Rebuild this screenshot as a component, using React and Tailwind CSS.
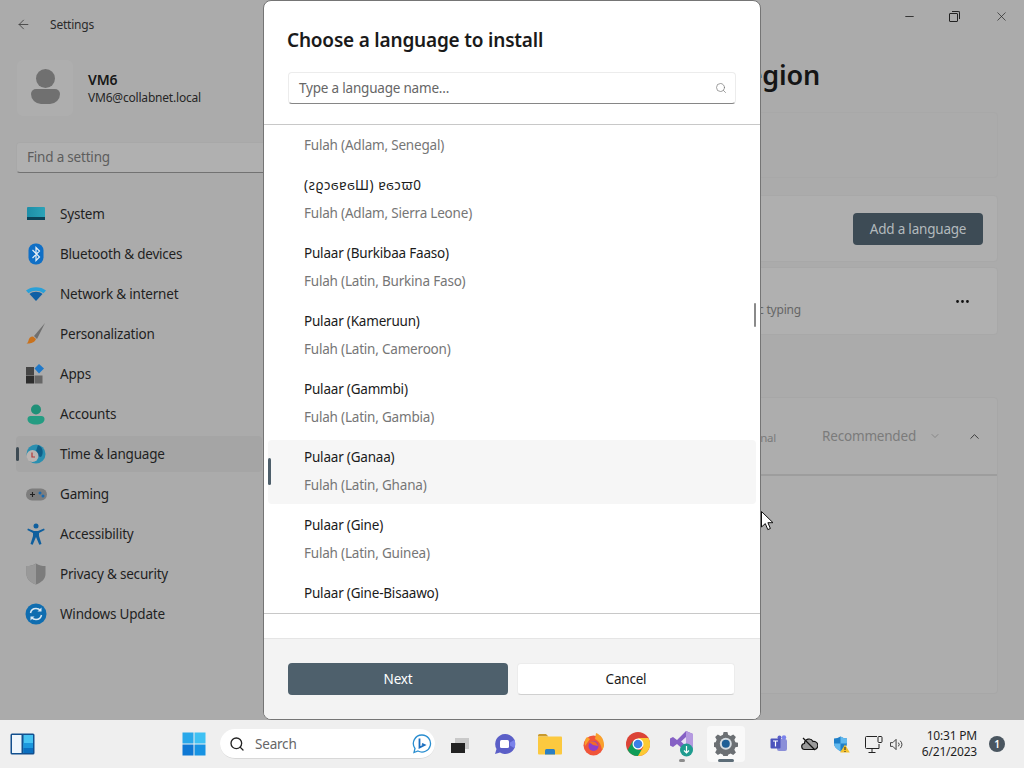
import React from "react";
import { ArrowLeft, ChevronDown, ChevronUp, Ellipsis, Minus, Search, X } from "lucide-react";

const SystemIcon = () => (
  <svg width="20" height="16" viewBox="0 0 20 16">
    <defs>
      <linearGradient id="sysScreen" x1="0" y1="0" x2="1" y2="0">
        <stop offset="0" stopColor="#1d8ea8" />
        <stop offset="1" stopColor="#2ba3b8" />
      </linearGradient>
    </defs>
    <rect x="1" y="1" width="18" height="13" rx="1" fill="url(#sysScreen)" />
    <rect x="1" y="11" width="18" height="3" fill="#0b4258" />
  </svg>
);

const BluetoothIcon = () => (
  <svg width="18" height="22" viewBox="0 0 18 22">
    <rect x="1.500" y="0.500" width="15" height="21" rx="7" fill="#0f6fc6" />
    <path d="M5.500 7l7 7-3.500 3.500v-13L12.500 8l-7 7" fill="none" stroke="#e6eef5" strokeWidth="1.200" />
  </svg>
);

const NetworkIcon = () => (
  <svg width="20" height="16" viewBox="0 0 20 16">
    <path d="M0 4.500C5 0 15 0 20 4.500l-2.500 2.800C13 4 7 4 2.500 7.300z" fill="#29a0d8" />
    <path d="M3.500 8C7 5 13 5 16.500 8L10 15z" fill="#0e5fa5" />
  </svg>
);

const BrushIcon = () => (
  <svg width="20" height="22" viewBox="0 0 20 22">
    <path d="M19 0L8 13l3 3z" fill="#6f6f6f" />
    <path d="M7 13.500c-3 0-4 2-4.500 4-.3 1.500-1 2.500-2 3 3 .5 8-.5 9.500-4.500z" fill="#c9721d" />
  </svg>
);

const AppsIcon = () => (
  <svg width="20" height="20" viewBox="0 0 20 20">
    <rect x="0" y="3" width="8" height="8" fill="#454545" />
    <rect x="0" y="11.500" width="8" height="8" fill="#2d2d2d" />
    <rect x="8.500" y="11.500" width="8" height="8" fill="#666" />
    <path d="M13 0l5 4.500-5 5-4.500-5z" fill="#1f78c8" />
  </svg>
);

const AccountsIcon = () => (
  <svg width="18" height="21" viewBox="0 0 18 21">
    <circle cx="9" cy="5.500" r="5" fill="#1f9078" />
    <path d="M0.500 15c0-2 1.500-3 3-3h11c1.500 0 3 1 3 3 0 4-4 5.500-8.500 5.500S.5 19 .5 15z" fill="#249c82" />
  </svg>
);

const TimeIcon = () => (
  <svg width="20" height="20" viewBox="0 0 20 20">
    <circle cx="10" cy="10" r="9.500" fill="#2a8fb0" />
    <path d="M12 1c5 2 6 8 3 12l-4-1-1-5z" fill="#0f5f88" />
    <circle cx="6.500" cy="12" r="6" fill="#b9b4b2" />
    <path d="M6 8.500V13h3" stroke="#b23a3a" strokeWidth="1.200" fill="none" />
  </svg>
);

const GamingIcon = () => (
  <svg width="21" height="13" viewBox="0 0 21 13">
    <rect x="0" y="0.500" width="21" height="12" rx="6" fill="#7d7d7d" />
    <path d="M4 6.500h5M6.500 4v5" stroke="#222" strokeWidth="1.100" />
    <circle cx="14" cy="5" r="1.500" fill="#1b6ab0" />
    <circle cx="17" cy="8" r="1.500" fill="#1b6ab0" />
  </svg>
);

const AccessIcon = () => (
  <svg width="18" height="22" viewBox="0 0 18 22">
    <circle cx="9" cy="3" r="2.500" fill="#0f5f9e" />
    <path d="M1 5.500l6 2.500h4l6-2.500.7 1.600L12 10v3l2.500 8-2.200.7L9 14l-3.300 7.700-2.200-.7L6 13v-3L.300 7.100z" fill="#0f5f9e" />
  </svg>
);

const ShieldIcon = () => (
  <svg width="20" height="22" viewBox="0 0 20 22">
    <path d="M10 0.500c3 2 6 2.500 9.500 2.500v8c0 5-4 8.500-9.500 10.500C4.500 19.500.5 16 .5 11V3C4 3 7 2.500 10 .5z" fill="#7c7c7c" />
    <path d="M10 0.500v21C4.500 19.500.5 16 .5 11V3C4 3 7 2.500 10 .5z" fill="#999" />
  </svg>
);

const UpdateIcon = () => (
  <svg width="22" height="22" viewBox="0 0 22 22">
    <circle cx="11" cy="11" r="10.500" fill="#0f6db0" />
    <path d="M5.500 10c.6-3 3-4.500 5.500-4.500 2 0 3.500.8 4.500 2M16.500 12c-.6 3-3 4.500-5.500 4.500-2 0-3.500-.8-4.500-2" fill="none" stroke="#dbe9f3" strokeWidth="1.500" />
    <path d="M16.500 4.500v4h-4zM5.500 17.500v-4h4z" fill="#dbe9f3" />
  </svg>
);

const navItems = [
  { label: "System", icon: <SystemIcon /> },
  { label: "Bluetooth & devices", icon: <BluetoothIcon /> },
  { label: "Network & internet", icon: <NetworkIcon /> },
  { label: "Personalization", icon: <BrushIcon /> },
  { label: "Apps", icon: <AppsIcon /> },
  { label: "Accounts", icon: <AccountsIcon /> },
  { label: "Time & language", icon: <TimeIcon />, active: true },
  { label: "Gaming", icon: <GamingIcon /> },
  { label: "Accessibility", icon: <AccessIcon /> },
  { label: "Privacy & security", icon: <ShieldIcon /> },
  { label: "Windows Update", icon: <UpdateIcon /> },
];

const languages = [
  { name: "", sub: "Fulah (Adlam, Senegal)" },
  { name: "(ƨϱɔϭɐϭШ) ɐϭɔϖ0", sub: "Fulah (Adlam, Sierra Leone)", nameClass: "tracking-[0.5px]" },
  { name: "Pulaar (Burkibaa Faaso)", sub: "Fulah (Latin, Burkina Faso)" },
  { name: "Pulaar (Kameruun)", sub: "Fulah (Latin, Cameroon)" },
  { name: "Pulaar (Gammbi)", sub: "Fulah (Latin, Gambia)" },
  { name: "Pulaar (Ganaa)", sub: "Fulah (Latin, Ghana)", hover: true },
  { name: "Pulaar (Gine)", sub: "Fulah (Latin, Guinea)" },
  { name: "Pulaar (Gine-Bisaawo)", sub: "" },
];

const Sidebar = () => (
  <div className="w-[264px] shrink-0 flex flex-col">
    <div className="h-[48px] flex items-center pl-[16px]">
      <ArrowLeft className="w-[15px] h-[15px] text-[#3a3a3a]" strokeWidth={1.3} />
      <span className="ml-[19px] mt-[2px] text-[12px] text-[#2b2b2b]">Settings</span>
    </div>
    <div className="mt-[12px] ml-[17px] flex items-center">
      <div className="w-[56px] h-[56px] rounded-[6px] bg-[#aeaeae] flex flex-col items-center pt-[9px]">
        <div className="w-[19px] h-[19px] rounded-full bg-[#707070]" />
        <div className="w-[29px] h-[15px] mt-[1px] rounded-b-[14px] rounded-t-[7px] bg-[#707070]" />
      </div>
      <div className="ml-[15px] mt-[2px] flex flex-col">
        <span className="text-[14px] leading-[18px] font-semibold text-[#171717]">VM6</span>
        <span className="text-[12px] leading-[18px] text-[#262626]">VM6@collabnet.local</span>
      </div>
    </div>
    <div className="mt-[26px] ml-[16px] h-[31px] flex items-center pl-[10px] bg-[#b0b0b0] border border-[#a8a8a8] border-b-[#727272] rounded-l-[4px]">
      <span className="text-[13.5px] text-[#5d5d5d]">Find a setting</span>
    </div>
    <nav className="mt-[21px] flex flex-col">
      {navItems.map((item) => (
        <div key={item.label} className="h-[40px] flex items-center pl-[16px]">
          <div className={`relative w-[246px] h-[36px] flex items-center rounded-[4px] ${item.active ? "bg-[#a5a5a5]" : ""}`}>
            {item.active && <div className="absolute left-0 top-[11px] w-[3px] h-[14px] rounded-full bg-[#3d4a53]" />}
            <div className="w-[40px] flex justify-center">{item.icon}</div>
            <span className="ml-[4px] text-[13.5px] text-[#1f1f1f]">{item.label}</span>
          </div>
        </div>
      ))}
    </nav>
  </div>
);

const SettingsContent = () => (
  <div className="flex-1 flex flex-col pl-[16px] pr-[26px]">
    <div className="h-[32px] -mr-[26px] flex justify-end items-center pt-[1px]">
      <div className="w-[46px] flex justify-center"><Minus className="w-[13px] h-[13px] text-[#111]" strokeWidth={1.4} /></div>
      <div className="w-[46px] flex justify-center">
        <div className="relative w-[9px] h-[9px] mr-[3px] border border-[#222] rounded-[1px] mt-[1px]">
          <div className="absolute -top-[3px] -right-[3px] w-[8px] h-[8px] border-t border-r border-[#222] rounded-tr-[2px]" />
        </div>
      </div>
      <div className="w-[46px] flex justify-center"><X className="w-[15px] h-[15px] text-[#222]" strokeWidth={1.1} /></div>
    </div>
    <div className="mt-[23px] h-[40px] flex items-center justify-end pr-[178px] text-[27px] font-semibold text-[#151515] whitespace-nowrap">
      Language &amp; region
    </div>
    <div className="mt-[17px] h-[66px] rounded-[4px] bg-[#ababab] border border-[#a8a8a8]" />
    <div className="mt-[17px] h-[67px] rounded-[4px] bg-[#afafaf] border border-[#a8a8a8] flex items-center justify-end pr-[14px]">
      <div className="w-[130px] h-[32px] pt-[1px] rounded-[4px] bg-[#3d4b55] flex items-center justify-center text-[13.5px] text-[#b3babd]">
        Add a language
      </div>
    </div>
    <div className="mt-[5px] h-[68px] rounded-[4px] bg-[#b0b0b0] border border-[#a8a8a8] relative flex items-center justify-end pr-[26px]">
      <span className="absolute right-[196px] top-[33px] text-[12px] text-[#666] whitespace-nowrap">Basic typing</span>
      <Ellipsis className="w-[17px] h-[17px] text-[#111]" strokeWidth={2} />
    </div>
    <div className="mt-[62px] h-[297px] rounded-[4px] bg-[#adadad] border border-[#a7a7a7] flex flex-col">
      <div className="h-[78px] border-b-2 border-[#9d9d9d] flex items-center justify-end pr-[14px] text-[#7b7b7b]">
        <span className="mr-[46px] mt-[4px] text-[11.5px] whitespace-nowrap">Optional</span>
        <span className="text-[13.5px]">Recommended</span>
        <ChevronDown className="ml-[13px] w-[12px] h-[12px]" strokeWidth={1.5} />
        <ChevronUp className="ml-[26px] mr-[1px] w-[15px] h-[15px] text-[#333]" strokeWidth={1.5} />
      </div>
    </div>
  </div>
);

const LanguageDialog = () => (
  <div className="absolute left-[263px] top-0 w-[498px] h-[720px] rounded-[8px] bg-white border border-[#757575] overflow-hidden flex flex-col">
    <div className="h-[123px] shrink-0 px-[24px] flex flex-col">
      <h1 className="mt-[24px] -ml-[1px] h-[30px] flex items-center text-[19px] font-semibold text-[#1a1a1a]">Choose a language to install</h1>
      <div className="mt-[17px] mr-[0px] h-[32px] flex items-center justify-between pl-[10px] pr-[8px] rounded-[4px] border border-[#ececec] border-b-[#868686]">
        <span className="text-[13.5px] text-[#666]">Type a language name...</span>
        <Search className="w-[12px] h-[12px] text-[#777]" strokeWidth={1.4} />
      </div>
    </div>
    <div className="relative h-[490px] shrink-0 border-y border-[#c8c8c8] overflow-hidden">
      <div className="-mt-[25px] pl-[4px] pr-[4px] flex flex-col gap-[4px]">
        {languages.map((lang) => (
          <div key={lang.name || lang.sub} className={`relative h-[64px] shrink-0 pl-[36px] flex flex-col rounded-[4px] ${lang.hover ? "bg-[#f6f6f6]" : ""}`}>
            {lang.hover && <div className="absolute left-0 top-[18px] w-[3px] h-[27px] rounded-full bg-[#4e5f6b]" />}
            <span className={`h-[20px] mt-[7px] leading-[20px] text-[13.5px] text-[#1b1b1b] ${lang.nameClass || ""}`}>{lang.name}</span>
            <span className="h-[20px] mt-[8px] leading-[20px] text-[13.5px] text-[#767676]">{lang.sub}</span>
          </div>
        ))}
      </div>
      <div className="absolute right-[4px] top-[178px] w-[2px] h-[24px] rounded-full bg-[#8a8a8a]" />
    </div>
    <div className="h-[25px] shrink-0 border-b border-[#e5e5e5]" />
    <div className="flex-1 bg-[#f3f3f3] px-[24px] pt-[24px] flex gap-[9px]">
      <div className="w-[220px] h-[32px] rounded-[4px] bg-[#4e606c] flex items-center justify-center text-[13.5px] text-white">Next</div>
      <div className="w-[218px] h-[32px] rounded-[4px] bg-white border border-[#ececec] border-b-[#d0d0d0] flex items-center justify-center text-[13.5px] text-[#1b1b1b]">Cancel</div>
    </div>
  </div>
);

const Cursor = () => (
  <svg className="absolute left-[761px] top-[511px]" width="14" height="20" viewBox="0 0 14 20">
    <path d="M0.500 0.500v15.500l3.800-3.400 2.500 6 2.600-1.100-2.500-5.800h5.100z" fill="#fff" stroke="#111" strokeWidth="1" />
  </svg>
);

const TaskSlot = ({ active, dot, className = "", children }) => (
  <div className={`relative w-[44px] h-[36px] flex items-center justify-center ${className}`}>
    {active && <div className="absolute inset-y-0 left-[3px] right-[3px] rounded-[4px] bg-[#f9f9f9]" />}
    <div className="relative flex">{children}</div>
    {dot && <div className={`absolute bottom-0 h-[3px] rounded-full ${active ? "w-[16px] bg-[#5c6c77]" : "w-[6px] bg-[#8c8c8c]"}`} />}
  </div>
);

const Taskbar = () => (
  <div className="h-[48px] bg-[#efefef] flex items-center">
    <svg className="ml-[10px] shrink-0" width="25" height="22" viewBox="0 0 25 22">
      <rect x="0.500" y="0.500" width="24" height="21" rx="1.500" fill="#12508f" />
      <rect x="2" y="2" width="9.500" height="18" fill="#eef6fc" />
      <rect x="13.500" y="2" width="9.500" height="18" fill="#46c3f2" />
      <rect x="13.500" y="10" width="9.500" height="5" fill="#1b97dd" />
      <rect x="13.500" y="15" width="9.500" height="5" fill="#0b6fc0" />
    </svg>
    <svg className="ml-[147px] shrink-0" width="24" height="24" viewBox="0 0 24 24">
      <rect x="0.500" y="0.500" width="11" height="11" fill="#29a8ea" />
      <rect x="12.500" y="0.500" width="11" height="11" fill="#3fc1f3" />
      <rect x="0.500" y="12.500" width="11" height="11" fill="#0f78d4" />
      <rect x="12.500" y="12.500" width="11" height="11" fill="#1793e3" />
    </svg>
    <div className="ml-[14px] w-[215px] h-[30px] rounded-full bg-white border-b border-[#d8d8d8] flex items-center pl-[9px] pr-[1px] shrink-0">
      <Search className="w-[16px] h-[16px] text-[#222]" strokeWidth={2} />
      <span className="ml-[10px] mt-[1px] text-[13.5px] text-[#666]">Search</span>
      <svg className="ml-auto mr-[2px]" width="20" height="20" viewBox="0 0 20 20">
        <path d="M10 1a8.500 8.500 0 1 1-4 16l-4 1.500 1-4A8.500 8.500 0 0 1 10 1z" fill="#fff" stroke="#2a8ed0" strokeWidth="1.300" />
        <path d="M7.500 4.500v9l5-2.500-2.500-1.200" fill="none" stroke="#1b6fc0" strokeWidth="1.800" />
      </svg>
    </div>
    <div className="ml-[3px] flex items-center shrink-0">
      <TaskSlot>
        <div className="relative w-[18px] h-[15px] mt-[2px]">
          <div className="absolute right-0 top-0 w-[14px] h-[11px] bg-[#c9c9c9]" />
          <div className="absolute left-0 bottom-0 w-[14px] h-[10px] bg-[#222]" />
        </div>
      </TaskSlot>
      <TaskSlot className="ml-[2px]">
        <svg width="24" height="22" viewBox="0 0 24 22">
          <path d="M11 1a10 10 0 1 1-5 18.500L1 21l1.500-5A10 10 0 0 1 11 1z" fill="#5b5fc7" />
          <rect x="6" y="7" width="9" height="8" rx="1.500" fill="#fff" />
          <path d="M16 9.500l5-3v9l-5-3z" fill="#7b83eb" />
        </svg>
      </TaskSlot>
      <TaskSlot>
        <svg width="24" height="22" viewBox="0 0 24 22">
          <path d="M0 2.500A1.500 1.500 0 0 1 1.500 1H8l2.500 2.500H0z" fill="#c99a2e" />
          <rect x="0" y="3.500" width="24" height="18" rx="1" fill="#fcc93f" />
          <path d="M7 21.500v-4a1.500 1.500 0 0 1 1.500-1.500h7a1.500 1.500 0 0 1 1.500 1.500v4z" fill="#2a7fc4" />
        </svg>
      </TaskSlot>
      <TaskSlot>
        <svg width="24" height="24" viewBox="0 0 24 24">
          <circle cx="11.500" cy="13.500" r="10" fill="#f0553a" />
          <path d="M5 5c-2 2-3 5-2 9l5-7zM14 1c5 2 8 6 8 12 0 2-1 4-2 5-1-6-3-9-7-11z" fill="#f9a02b" />
          <circle cx="11.500" cy="14" r="5" fill="#8e3dc9" />
          <path d="M7 10c4-2 8 0 9 4l-5-1z" fill="#f06a2a" />
        </svg>
      </TaskSlot>
      <TaskSlot>
        <svg width="24" height="24" viewBox="0 0 24 24">
          <circle cx="12" cy="12" r="12" fill="#db4437" />
          <path d="M12 24a12 12 0 0 1-10.400-6L6.800 9 12 18h6z" fill="#0f9d58" />
          <path d="M12 6h10.400A12 12 0 0 1 12 24l5.200-9z" fill="#fcc934" />
          <circle cx="12" cy="12" r="5.500" fill="#fff" />
          <circle cx="12" cy="12" r="4.300" fill="#3c7fe6" />
        </svg>
      </TaskSlot>
      <TaskSlot dot>
        <svg width="26" height="28" viewBox="0 0 26 28">
          <path d="M17 1l7 3v15l-7 3-9-8-4 3-3-1.500v-7L4 7l4 3z" fill="#8661c5" />
          <path d="M17 7v9l-5-4.500z" fill="#e8e0f5" />
          <path d="M17 1l7 3v15l-7 3z" fill="#b59ae0" />
          <circle cx="17.500" cy="20" r="6.500" fill="#1f9c8f" />
          <path d="M17.500 16v7M15 20.500l2.500 2.500 2.500-2.500" stroke="#fff" strokeWidth="1.200" fill="none" />
        </svg>
      </TaskSlot>
      <TaskSlot active dot>
        <svg width="24" height="24" viewBox="0 0 24 24">
          <path d="M10 0.500h4l.7 3 2.600 1.100 2.700-1.600 2.800 2.800-1.600 2.700 1.100 2.600 3 .7v4l-3 .7-1.100 2.600 1.600 2.700-2.800 2.800-2.700-1.600-2.600 1.100-.7 3h-4l-.7-3-2.600-1.100-2.700 1.600-2.800-2.800 1.600-2.700-1.100-2.600-3-.7v-4l3-.7 1.100-2.600-1.600-2.700 2.800-2.800 2.700 1.600 2.600-1.100z" fill="#6b6f73" transform="translate(0 -.5) scale(.96)" />
          <circle cx="11.800" cy="11.800" r="6" fill="#d6dde2" />
          <circle cx="11.800" cy="11.800" r="4" fill="#1f5f96" />
        </svg>
      </TaskSlot>
    </div>
    <div className="ml-[15px] flex items-center shrink-0">
      <div className="w-[31px] flex justify-center">
        <svg width="18" height="18" viewBox="0 0 18 18">
          <rect x="7" y="4" width="10" height="12" rx="2" fill="#8b8fd8" />
          <circle cx="14" cy="2.500" r="2.200" fill="#7b83eb" />
          <circle cx="9.500" cy="2.500" r="2" fill="#5b5fc7" />
          <rect x="0.500" y="3.500" width="10" height="10" rx="1" fill="#4b53bc" />
          <path d="M3 6h5M5.500 6v5.500" stroke="#fff" strokeWidth="1.200" />
        </svg>
      </div>
      <div className="w-[31px] flex justify-center">
        <svg width="17" height="14" viewBox="0 0 17 14">
          <path d="M4 12.500a3 3 0 0 1-.5-6A4.500 4.500 0 0 1 12 4.500a3.500 3.500 0 0 1 1.500 8z" fill="#9a9a9a" stroke="#111" strokeWidth="1.200" />
          <path d="M2 1l12 12" stroke="#111" strokeWidth="1.200" />
        </svg>
      </div>
      <div className="w-[33px] flex justify-center">
        <svg width="17" height="17" viewBox="0 0 17 17">
          <path d="M7.500 0.500c2 1.300 4 2 6.500 2v5c0 3-2.500 5.500-6.500 8C3.500 13 1 10.500 1 7.500v-5c2.500 0 4.500-.7 6.500-2z" fill="#1f7fc8" />
          <path d="M7.500 0.500c2 1.300 4 2 6.500 2v5H7.500v8C3.500 13 1 10.500 1 7.500h6.500z" fill="#62b9ee" />
          <path d="M12 8.500l4.800 8H7.200z" fill="#f5c22e" />
          <path d="M12 11v3M12 15v1" stroke="#222" strokeWidth="1" />
        </svg>
      </div>
      <div className="w-[32px] flex justify-center">
        <svg width="18" height="17" viewBox="0 0 18 17" fill="none" stroke="#222" strokeWidth="1">
          <path d="M12 .5H1.500a1 1 0 0 0-1 1v10a1 1 0 0 0 1 1H14V8" />
          <path d="M7 12.500v3.500M3.500 16.500h7" />
          <rect x="13" y=".5" width="4" height="6" rx="1" />
        </svg>
      </div>
      <div className="w-[14px] flex justify-center">
        <svg width="15" height="13" viewBox="0 0 15 13" fill="none" stroke="#333" strokeWidth="1">
          <path d="M.5 4.500h2.500l3.500-3.500v11l-3.500-3.500H.5z" />
          <path d="M9 4.500a3 3 0 0 1 0 4M11 2.500a6 6 0 0 1 0 8" />
        </svg>
      </div>
    </div>
    <div className="ml-[14px] flex flex-col items-end shrink-0 text-[12px] leading-[16px] text-[#1f1f1f] w-[59px]">
      <span className="whitespace-nowrap">10:31 PM</span>
      <span className="whitespace-nowrap">6/21/2023</span>
    </div>
    <div className="ml-[12px] w-[16px] h-[16px] rounded-full bg-[#4a5660] flex items-center justify-center text-[10px] font-semibold text-white shrink-0">
      1
    </div>
  </div>
);

export default function App() {
  return (
    <div className="relative w-[1024px] h-[768px] overflow-hidden flex flex-col tracking-[-0.2px] [font-family:'Noto_Sans',sans-serif]">
      <div className="h-[720px] bg-[#ababab] flex shrink-0">
        <Sidebar />
        <SettingsContent />
      </div>
      <Taskbar />
      <LanguageDialog />
      <Cursor />
    </div>
  );
}
